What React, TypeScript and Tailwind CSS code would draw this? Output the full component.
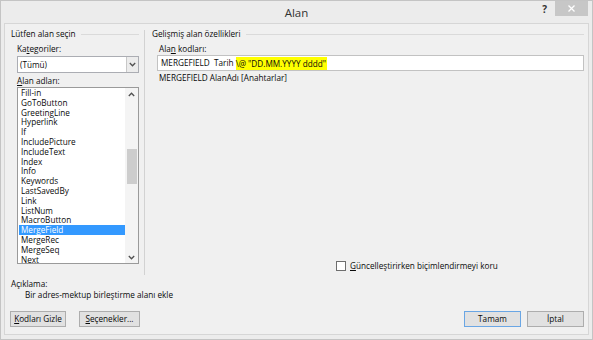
import React from "react";

const fields = [
  "Fill-in",
  "GoToButton",
  "GreetingLine",
  "Hyperlink",
  "If",
  "IncludePicture",
  "IncludeText",
  "Index",
  "Info",
  "Keywords",
  "LastSavedBy",
  "Link",
  "ListNum",
  "MacroButton",
  "MergeField",
  "MergeRec",
  "MergeSeq",
  "Next",
];

function Chevron({ up = false }: { up?: boolean }) {
  return (
    <svg width="7" height="5" viewBox="0 0 7 5">
      <polyline
        points={up ? "0.8,4 3.5,1.2 6.2,4" : "0.8,1 3.5,3.8 6.2,1"}
        fill="none"
        stroke="#505050"
        strokeWidth="1.3"
      />
    </svg>
  );
}

function GroupHeader({ title }: { title: string }) {
  return (
    <div className="flex items-center h-[10px] leading-[10px]">
      <span>{title}</span>
      <div className="flex-1 ml-[5px] border-t border-[#dadada]" />
    </div>
  );
}

function Button({ children, primary = false, w }: { children: React.ReactNode; primary?: boolean; w: string }) {
  return (
    <div
      className={
        "h-[16px] flex items-center justify-center bg-[#e1e1e1] border leading-[10px] " +
        w +
        (primary ? " border-[#6aa6e4]" : " border-[#adadad]")
      }
    >
      {children}
    </div>
  );
}

export default function App() {
  return (
    <div className="w-[593px] h-[340px] bg-[#ececec] border border-[#c4c4c4] flex flex-col font-['Open_Sans',sans-serif] text-[8.2px] text-[#0a0a0a] overflow-hidden">
      {/* title bar */}
      <div className="h-[22px] shrink-0 grid grid-cols-[1fr_auto_1fr]">
        <div />
        <div className="pt-[2px] text-[11.5px] leading-[20px] text-[#333]">Alan</div>
        <div className="flex justify-end items-start">
          <span className="mt-[1px] mr-[8px] text-[10px] leading-[14px] font-bold text-[#333]">?</span>
          <div className="w-[33px] h-[15px] bg-[#c7c7c7] mr-[4px] flex items-center justify-center">
            <svg width="7" height="7" viewBox="0 0 7 7">
              <path d="M0.5 0.5 L6.5 6.5 M6.5 0.5 L0.5 6.5" stroke="#fff" strokeWidth="1.3" />
            </svg>
          </div>
        </div>
      </div>

      {/* content */}
      <div className="flex-1 ml-[3px] mr-[3px] mb-[4px] border border-[#d6d6d6] bg-[#f0f0f0] flex flex-col">
        <div className="h-[251px] flex">
          {/* left group */}
          <div className="w-[134px] pl-[6px] pt-[5px] flex flex-col">
            <GroupHeader title="Lütfen alan seçin" />
            <div className="pl-[6px] mt-[5px] h-[10px] leading-[10px]">
              Ka<span className="underline">t</span>egoriler:
            </div>
            <div className="ml-[6px] mt-[2px] h-[17px] bg-white border border-[#abadb3] flex">
              <div className="flex-1 pl-[2px] leading-[15px]">(Tümü)</div>
              <div className="w-[12px] bg-[#ececec] border-l border-[#c8c8c8] flex items-center justify-center">
                <Chevron />
              </div>
            </div>
            <div className="pl-[6px] mt-[3px] h-[10px] leading-[10px]">
              <span className="underline">A</span>lan adları:
            </div>
            <div className="ml-[6px] mt-[1px] h-[177px] bg-white border border-[#9a9a9a] flex">
              <div className="flex-1 flex flex-col">
                {fields.map((f) => (
                  <div
                    key={f}
                    className={
                      "h-[9.8px] leading-[9.8px] pl-[2px] ml-[1px] " +
                      (f === "MergeField" ? "bg-[#3399ff] text-white" : "")
                    }
                  >
                    {f}
                  </div>
                ))}
              </div>
              <div className="w-[13px] bg-[#f4f4f4] flex flex-col items-center">
                <div className="h-[12px] flex items-center justify-center">
                  <Chevron up />
                </div>
                <div className="flex-1 w-full px-[1.5px] pt-[49px]">
                  <div className="h-[35px] bg-[#cdcdcd]" />
                </div>
                <div className="h-[12px] flex items-center justify-center">
                  <Chevron />
                </div>
              </div>
            </div>
          </div>

          {/* separator */}
          <div className="ml-[5px] mt-[6px] w-px bg-[#d2d2d2]" />

          {/* right group */}
          <div className="flex-1 pl-[7px] pr-[4px] pt-[5px] flex flex-col">
            <GroupHeader title="Gelişmiş alan özellikleri" />
            <div className="pl-[7px] mt-[5px] h-[10px] leading-[10px]">
              Ala<span className="underline">n</span> kodları:
            </div>
            <div className="ml-[5px] mt-[1px] h-[16px] bg-white border border-[#c2c2c2] flex items-center pl-[3px] whitespace-pre">
              <span>MERGEFIELD  Tarih </span>
              <span className="bg-[#ffff00] h-[13px] leading-[13px] pr-[1px]">\@ "DD.MM.YYYY dddd"</span>
            </div>
            <div className="pl-[7px] mt-[2px] h-[10px] leading-[10px]">MERGEFIELD AlanAdı [Anahtarlar]</div>
            <div className="flex-1" />
            <div className="ml-[184px] mb-[4px] flex items-center h-[10px]">
              <div className="w-[10px] h-[10px] bg-white border border-[#6e6e6e]" />
              <span className="ml-[4px] leading-[10px]">
                <span className="underline">G</span>üncelleştirirken biçimlendirmeyi koru
              </span>
            </div>
          </div>
        </div>

        {/* bottom */}
        <div className="pl-[6px] mt-[4px] h-[10px] leading-[10px]">Açıklama:</div>
        <div className="pl-[20px] mt-[1px] h-[10px] leading-[10px]">Bir adres-mektup birleştirme alanı ekle</div>
        <div className="mt-[11px] pl-[5px] pr-[4px] flex">
          <Button w="w-[56px]">
            <span className="underline">K</span>odları Gizle
          </Button>
          <div className="ml-[13px]">
            <Button w="w-[61px]">
              <span className="underline">S</span>eçenekler...
            </Button>
          </div>
          <div className="flex-1" />
          <Button w="w-[57px]" primary>
            Tamam
          </Button>
          <div className="ml-[6px]">
            <Button w="w-[57px]">İptal</Button>
          </div>
        </div>
      </div>
    </div>
  );
}
